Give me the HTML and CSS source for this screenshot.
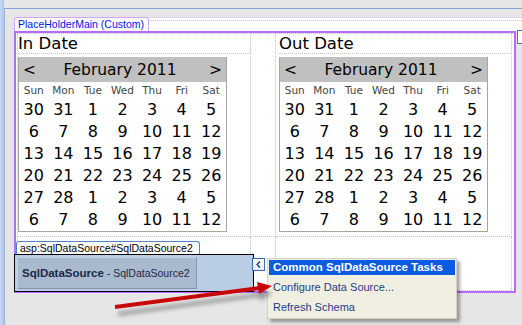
FILE: index.html
```html
<!DOCTYPE html>
<html lang="en">
<head>
  <meta charset="UTF-8"/>
  <title>Designer · PlaceHolderMain</title>
  <link rel="stylesheet" href="styles.css">
</head>
<body>
  <div class="ruler"></div>
  <div class="surface">
    <div class="placeholder">
      <div class="ph-head">
        <div class="ph-tab">PlaceHolderMain (Custom)</div>
        <div class="ph-rest"><div></div></div>
      </div>
      <div class="ph-body">
        <div class="layout">
          <!-- row 1 -->
          <div class="cell">
            <div class="cell-label">In Date</div>
            <div class="calendar">
              <div class="cal-head"><span>&lt;</span><span class="cal-title">February 2011</span><span>&gt;</span></div>
              <div class="cal-grid">
                <span class="dow">Sun</span><span class="dow">Mon</span><span class="dow">Tue</span><span class="dow">Wed</span><span class="dow">Thu</span><span class="dow">Fri</span><span class="dow">Sat</span>
                <span>30</span><span>31</span><span>1</span><span>2</span><span>3</span><span>4</span><span>5</span>
                <span>6</span><span>7</span><span>8</span><span>9</span><span>10</span><span>11</span><span>12</span>
                <span>13</span><span>14</span><span>15</span><span>16</span><span>17</span><span>18</span><span>19</span>
                <span>20</span><span>21</span><span>22</span><span>23</span><span>24</span><span>25</span><span>26</span>
                <span>27</span><span>28</span><span>1</span><span>2</span><span>3</span><span>4</span><span>5</span>
                <span>6</span><span>7</span><span>8</span><span>9</span><span>10</span><span>11</span><span>12</span>
              </div>
            </div>
          </div>
          <div class="cell"></div>
          <div class="cell cell-right">
            <div class="cell-label">Out Date</div>
            <div class="calendar">
              <div class="cal-head"><span>&lt;</span><span class="cal-title">February 2011</span><span>&gt;</span></div>
              <div class="cal-grid">
                <span class="dow">Sun</span><span class="dow">Mon</span><span class="dow">Tue</span><span class="dow">Wed</span><span class="dow">Thu</span><span class="dow">Fri</span><span class="dow">Sat</span>
                <span>30</span><span>31</span><span>1</span><span>2</span><span>3</span><span>4</span><span>5</span>
                <span>6</span><span>7</span><span>8</span><span>9</span><span>10</span><span>11</span><span>12</span>
                <span>13</span><span>14</span><span>15</span><span>16</span><span>17</span><span>18</span><span>19</span>
                <span>20</span><span>21</span><span>22</span><span>23</span><span>24</span><span>25</span><span>26</span>
                <span>27</span><span>28</span><span>1</span><span>2</span><span>3</span><span>4</span><span>5</span>
                <span>6</span><span>7</span><span>8</span><span>9</span><span>10</span><span>11</span><span>12</span>
              </div>
            </div>
          </div>
          <!-- row 2 -->
          <div class="cell">
            <div class="ds-control">
              <div class="ds-tab">asp:SqlDataSource#SqlDataSource2</div>
              <div class="ds-box">
                <div class="ds-btn"><b>SqlDataSource</b>&nbsp;- SqlDataSource2</div>
              </div>
            </div>
          </div>
          <div class="cell"></div>
          <div class="cell"></div>
        </div>
      </div>
    </div>
  </div>

  <!-- design-time overlays -->
  <div class="edge-glyph"></div>
  <div class="smart-tag">
    <svg width="5" height="7" viewBox="0 0 5 7"><path d="M4 0.5L1 3.5L4 6.5" stroke="#1c2a58" stroke-width="1.2" fill="none"/></svg>
  </div>
  <div class="tasks">
    <div class="tasks-title">Common SqlDataSource Tasks</div>
    <div class="tasks-list">
      <div class="tasks-item">Configure Data Source...</div>
      <div class="tasks-item">Refresh Schema</div>
    </div>
  </div>
  <svg class="arrow" width="522" height="325" viewBox="0 0 522 325">
    <defs>
      <filter id="soft" x="-20%" y="-100%" width="140%" height="300%">
        <feGaussianBlur stdDeviation="2"/>
      </filter>
    </defs>
    <g filter="url(#soft)" opacity="0.5">
      <line x1="118" y1="314" x2="259" y2="295" stroke="#505050" stroke-width="4"/>
      <polygon points="273,293 258,289 260,301" fill="#505050"/>
    </g>
    <line x1="115" y1="307" x2="259" y2="288" stroke="#c80808" stroke-width="4"/>
    <polygon points="272,286 257,282 259,294" fill="#c80808"/>
  </svg>
</body>
</html>
```

FILE: styles.css
```css
/* Reset & Base */
*, *::before, *::after { margin:0; padding:0; box-sizing:border-box; }
body {
  width: 522px;
  height: 325px;
  overflow: hidden;
  position: relative;
  display: flex;
  background: #e6e6e6;
  font-family: "Liberation Sans", Arial, sans-serif;
  color: #000;
}

/* Designer frame */
.ruler {
  width: 4px;
  background: linear-gradient(to right, #c8dbf6, #a9c3ec);
}
.surface {
  flex: 1;
  margin-top: 8px;
  border-top: 1px solid #84a4d4;
  border-left: 1px solid #9cb6de;
}
.placeholder {
  margin: 8px 0 0 9px;
}
.ph-head {
  display: flex;
  height: 14px;
}
.ph-tab {
  width: 135px;
  border: 1px solid #cfa8fb;
  border-bottom: 0;
  border-radius: 3px 3px 0 0;
  background: #fff;
  color: #0010f0;
  font-size: 10.5px;
  line-height: 12px;
  padding-left: 3px;
  white-space: nowrap;
}
.ph-rest {
  flex: 1;
  border-top: 1px solid #e4cefc;
  background: #fff;
  padding-top: 2px;
}
.ph-rest div {
  border-top: 1px dotted #c4c4c4;
}
.ph-body {
  width: 502px;
  height: 262px;
  border: 2px solid #b46cff;
  background: #fff;
  padding-left: 1px;
}

/* Layout table */
.layout {
  display: grid;
  grid-template-columns: 233px 25px 236px;
  grid-template-rows: auto 54px;
  border-top: 1px dotted #c4c4c4;
  border-left: 1px dotted #c4c4c4;
}
.cell {
  border-right: 1px dotted #c4c4c4;
  border-bottom: 1px dotted #c4c4c4;
  padding-bottom: 4px;
}
.cell-right {
  padding-left: 3px;
}
.cell-label {
  font-family: "DejaVu Sans ExtraLight", "DejaVu Sans", Verdana, sans-serif;
  font-size: 16.5px;
  line-height: 18px;
  padding-top: 1px;
  border-bottom: 1px dotted #c4c4c4;
}

/* Calendar */
.calendar {
  width: 209px;
  margin-top: 3px;
  border: 1px solid #a7a79b;
  border-top: 0;
  font-family: "DejaVu Sans ExtraLight", "DejaVu Sans", Verdana, sans-serif;
}
.cal-head {
  height: 25px;
  display: flex;
  align-items: center;
  padding: 0 4px;
  background: #c0c0c0;
  font-size: 15.5px;
}
.cal-title {
  flex: 1;
  text-align: center;
  padding-right: 5px;
}
.cal-grid {
  display: grid;
  grid-template-columns: repeat(7, 1fr);
  text-align: center;
  font-size: 16px;
  line-height: 22px;
}
.cal-grid .dow {
  font-family: "DejaVu Sans", Verdana, sans-serif;
  font-size: 10.5px;
  line-height: 17px;
  color: #444;
}

/* SqlDataSource control */
.ds-control {
  margin: 4px 0 0 -4px;
}
.ds-tab {
  width: 184px;
  height: 13px;
  margin-left: 2px;
  border: 1px solid #5a80c8;
  border-bottom: 0;
  border-radius: 3px 3px 0 0;
  background: #fff;
  font-size: 10.5px;
  line-height: 12px;
  padding-left: 3px;
  white-space: nowrap;
}
.ds-box {
  width: 240px;
  height: 38px;
  border: 1px solid #000;
  background: #b9cde5;
  padding: 2px;
}
.ds-btn {
  width: 180px;
  height: 32px;
  display: flex;
  align-items: center;
  padding-left: 4px;
  background: #a9b9ce;
  border: 1px solid;
  border-color: #c6d2e2 #8494ac #8494ac #c6d2e2;
  color: #1c2848;
  font-size: 10.5px;
  white-space: nowrap;
}
.ds-btn b {
  font-size: 11.5px;
}

/* Overlays */
.edge-glyph {
  position: absolute;
  left: 517px;
  top: 30px;
  width: 8px;
  height: 14px;
  border: 1px solid #4a72bc;
  background: #fff;
}
.smart-tag {
  position: absolute;
  left: 252px;
  top: 258px;
  width: 13px;
  height: 13px;
  border: 1px solid #3c6ab4;
  background: linear-gradient(#fff, #e2eaf6);
  display: flex;
  align-items: center;
  justify-content: center;
}
.tasks {
  position: absolute;
  left: 267px;
  top: 258px;
  width: 190px;
  height: 61px;
  padding: 1px;
  border: 1px solid #d6d2c2;
  background: #f1efe2;
  box-shadow: 3px 3px 3px rgba(0,0,0,0.35);
}
.tasks-title {
  height: 15px;
  line-height: 15px;
  padding-left: 4px;
  background: #0a5be0;
  color: #fff;
  font-weight: bold;
  font-size: 11.5px;
  white-space: nowrap;
}
.tasks-list {
  padding-top: 2px;
}
.tasks-item {
  line-height: 20px;
  padding-left: 4px;
  color: #1f3c8c;
  font-size: 11px;
}
.arrow {
  position: absolute;
  left: 0;
  top: 0;
  pointer-events: none;
}
```
